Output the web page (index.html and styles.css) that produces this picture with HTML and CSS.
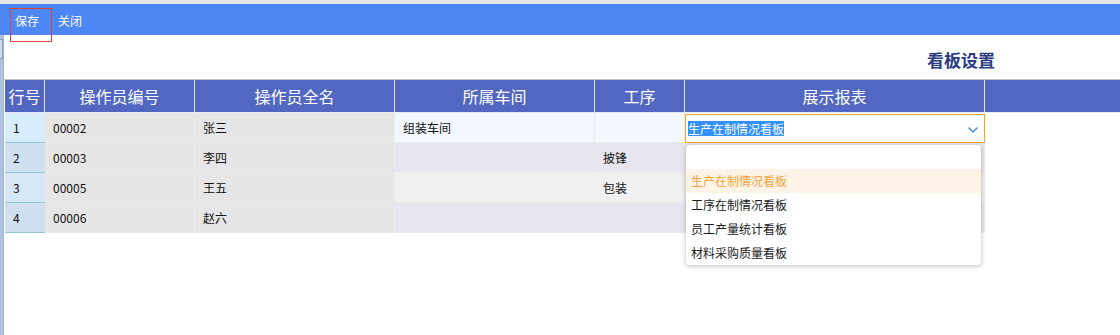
FILE: index.html
```html
<!DOCTYPE html>
<html lang="zh-CN">
<head>
<meta charset="utf-8">
<title>看板设置</title>
<link rel="stylesheet" href="styles.css">
</head>
<body>
<div class="topline"></div>
<div class="toolbar">
  <span class="tb-btn focused">保存</span>
  <span class="tb-btn">关闭</span>
</div>
<div class="main">
  <div class="sidebar"><div class="side-box"></div></div>
  <div class="content">
    <div class="title-row"><h1 class="title">看板设置</h1></div>
    <div class="grid">
      <div class="hd">行号</div>
      <div class="hd">操作员编号</div>
      <div class="hd">操作员全名</div>
      <div class="hd">所属车间</div>
      <div class="hd">工序</div>
      <div class="hd">展示报表</div>
      <div class="hd hd-last"></div>

      <div class="c num r1">1</div>
      <div class="c ro">00002</div>
      <div class="c ro">张三</div>
      <div class="c ed r1">组装车间</div>
      <div class="c ed r1"></div>
      <div class="c editor">
        <span class="sel">生产在制情况看板</span>
        <svg class="chev" width="10" height="6" viewBox="0 0 10 6"><polyline points="0.5,0.5 5,5 9.5,0.5" fill="none" stroke="#2a80d2" stroke-width="1.2"/></svg>
        <div class="dropdown">
          <div class="opt"></div>
          <div class="opt active">生产在制情况看板</div>
          <div class="opt">工序在制情况看板</div>
          <div class="opt">员工产量统计看板</div>
          <div class="opt">材料采购质量看板</div>
        </div>
      </div>
      <div class="c blank"></div>

      <div class="c num r2">2</div>
      <div class="c ro">00003</div>
      <div class="c ro">李四</div>
      <div class="c ed r2"></div>
      <div class="c ed r2">披锋</div>
      <div class="c ed r2"></div>
      <div class="c blank"></div>

      <div class="c num r3">3</div>
      <div class="c ro">00005</div>
      <div class="c ro">王五</div>
      <div class="c ed r3"></div>
      <div class="c ed r3">包装</div>
      <div class="c ed r3"></div>
      <div class="c blank"></div>

      <div class="c num r4">4</div>
      <div class="c ro">00006</div>
      <div class="c ro">赵六</div>
      <div class="c ed r4"></div>
      <div class="c ed r4"></div>
      <div class="c ed r4"></div>
      <div class="c blank"></div>
    </div>
  </div>
</div>
</body>
</html>
```

FILE: styles.css
```css
html, body {
  margin: 0;
  padding: 0;
  background: #ffffff;
  font-family: "Noto Sans CJK SC", "DejaVu Sans", sans-serif;
  font-size: 12px;
  color: #111;
  height: 335px;
  overflow: hidden;
}

.topline {
  height: 4px;
  background: #e6e6e6;
}

.toolbar {
  height: 31px;
  background: #4c87f5;
  display: flex;
  align-items: center;
  padding-left: 15px;
  gap: 19px;
  position: relative;
  z-index: 3;
}

.tb-btn {
  position: relative;
  color: #ffffff;
  font-size: 12px;
  line-height: 16px;
  margin-top: 2px;
}

.tb-btn.focused::after {
  content: "";
  position: absolute;
  left: -5px;
  top: -5px;
  width: 42px;
  height: 34px;
  border: 1px solid #e2403a;
  box-sizing: border-box;
}

.main {
  display: flex;
  height: 300px;
}

.sidebar {
  width: 3px;
  background: #a9c2e6;
  border-right: 1px solid #b3b3b3;
}

.side-box {
  margin-top: 4px;
  height: 20px;
  box-sizing: border-box;
  border: 1px solid #7f9cc6;
  border-left: none;
  background: #cddcf0;
}

.content {
  flex: 1;
  display: flex;
  flex-direction: column;
}

.title-row {
  height: 44px;
  border-bottom: 1px solid #c4c4c4;
  box-sizing: content-box;
  display: flex;
  justify-content: flex-end;
  padding-right: 125px;
}

.title {
  margin: 14px 0 0 0;
  font-size: 17px;
  line-height: 22px;
  font-weight: bold;
  color: #2b3b82;
}

.grid {
  display: grid;
  grid-template-columns: 40px 150px 200px 200px 90px 300px 1fr;
  grid-auto-rows: 30px;
  grid-template-rows: 33px;
  margin-left: 1px;
}

.hd {
  background: #5167c2;
  color: #ffffff;
  font-size: 16px;
  display: flex;
  align-items: center;
  justify-content: center;
  border-right: 1px solid #dfe4f5;
  border-bottom: 1px solid #e8ecf8;
  box-sizing: border-box;
}

.hd-last {
  border-right: none;
}

.c {
  box-sizing: border-box;
  display: flex;
  align-items: center;
  padding-left: 8px;
  border-bottom: 1px solid #ececec;
  border-right: 1px solid #ececec;
  position: relative;
}

.num {
  border-bottom: 1px solid #8fc6da;
  border-right: none;
  padding-left: 8px;
}
.num.r1 { background: #d7edfc; }
.num.r2 { background: #cfe0f0; }
.num.r3 { background: #d7e8f4; }
.num.r4 { background: #cfe0f0; }

.ro {
  background: #e6e6e6;
  border-bottom-color: #ebebeb;
}

.ed.r1 { background: #f3f7fe; }
.ed.r2 { background: #e7e6ef; }
.ed.r3 { background: #f0f0f0; }
.ed.r4 { background: #e7e6ef; }

.blank {
  background: #ffffff;
  border: none;
}

.editor {
  background: #ffffff;
  border: 1px solid #f5a623;
  padding-left: 2px;
  justify-content: space-between;
  padding-right: 6px;
  margin-top: 1px;
  height: 29px;
}

.sel {
  background: #3390ff;
  color: #ffffff;
  line-height: 15px;
}

.chev {
  display: block;
  margin-top: 2px;
}

.dropdown {
  position: absolute;
  left: 0;
  top: 30px;
  width: 295px;
  height: 120px;
  background: #ffffff;
  border-radius: 4px;
  box-shadow: 0 1px 5px rgba(0, 0, 0, 0.28);
  z-index: 5;
  overflow: hidden;
}

.opt {
  height: 24px;
  line-height: 24px;
  padding-left: 5px;
  color: #1a1a1a;
  font-size: 12px;
}

.opt.active {
  background: #fdf4e7;
  color: #f5a33d;
}
```
